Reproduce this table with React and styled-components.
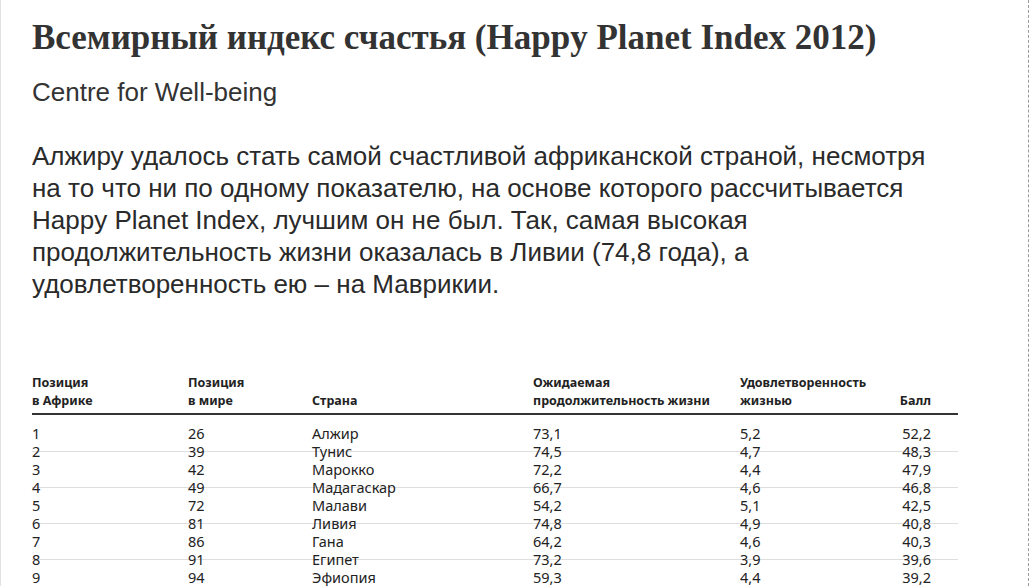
import React from 'react';
import styled, { createGlobalStyle } from 'styled-components';

const GlobalStyle = createGlobalStyle`
  html, body {
    margin: 0;
    padding: 0;
    background: #fff;
  }
  body {
    font-family: 'Liberation Sans', Arial, sans-serif;
    color: #333;
  }
`;

const Page = styled.div`
  box-sizing: border-box;
  width: 1029px;
  height: 586px;
  overflow: hidden;
  border-left: 1px solid #e2e2e2;
  border-right: 1px dashed #999;
`;

const Article = styled.article`
  padding: 16px 0 0 31px;
  width: 930px;
`;

const Title = styled.h1`
  margin: 0;
  font-family: 'Liberation Serif', 'DejaVu Serif', serif;
  font-weight: bold;
  font-size: 35px;
  line-height: 44px;
  color: #333;
`;

const Source = styled.p`
  margin: 16px 0 0;
  font-size: 26px;
  line-height: 32px;
`;

const Lead = styled.p`
  margin: 32px 0 0;
  max-width: 900px;
  font-size: 26px;
  line-height: 32px;
  color: #2a2a2a;
`;

const Table = styled.table`
  margin-top: 74px;
  width: 926px;
  border-collapse: collapse;
  font-family: 'Noto Sans', 'Open Sans', sans-serif;
  color: #222;
`;

const HeadCell = styled.th`
  padding: 0 0 3px;
  text-align: ${(p) => (p.right ? 'right' : 'left')};
  vertical-align: bottom;
  font-size: 12.5px;
  line-height: 18px;
  font-weight: bold;
  width: ${(p) => p.w}px;
  border-bottom: 2px solid #333;
  padding-right: ${(p) => (p.right ? '27px' : '0')};
`;

const Row = styled.tr`
  background: ${(p) =>
    p.striped
      ? 'linear-gradient(transparent 9px, #dedede 9px, #dedede 10px, transparent 10px)'
      : 'none'};
  &:first-child td {
    padding-top: 9px;
  }
`;

const Cell = styled.td`
  padding: 0;
  height: 18px;
  font-size: 14.5px;
  line-height: 18px;
  text-align: ${(p) => (p.right ? 'right' : 'left')};
  padding-right: ${(p) => (p.right ? '27px' : '0')};
`;

const rows = [
  ['1', '26', 'Алжир', '73,1', '5,2', '52,2'],
  ['2', '39', 'Тунис', '74,5', '4,7', '48,3'],
  ['3', '42', 'Марокко', '72,2', '4,4', '47,9'],
  ['4', '49', 'Мадагаскар', '66,7', '4,6', '46,8'],
  ['5', '72', 'Малави', '54,2', '5,1', '42,5'],
  ['6', '81', 'Ливия', '74,8', '4,9', '40,8'],
  ['7', '86', 'Гана', '64,2', '4,6', '40,3'],
  ['8', '91', 'Египет', '73,2', '3,9', '39,6'],
  ['9', '94', 'Эфиопия', '59,3', '4,4', '39,2'],
];

export default function App() {
  return (
    <>
      <GlobalStyle />
      <Page>
        <Article>
          <Title>Всемирный индекс счастья (Happy Planet Index 2012)</Title>
          <Source>Centre for Well-being</Source>
          <Lead>
            Алжиру удалось стать самой счастливой африканской страной, несмотря
            на то что ни по одному показателю, на основе которого рассчитывается
            Happy Planet Index, лучшим он не был. Так, самая высокая
            продолжительность жизни оказалась в Ливии (74,8 года), а
            удовлетворенность ею – на Маврикии.
          </Lead>
          <Table>
            <thead>
              <tr>
                <HeadCell w={156}>Позиция<br />в Африке</HeadCell>
                <HeadCell w={124}>Позиция<br />в мире</HeadCell>
                <HeadCell w={221}>Страна</HeadCell>
                <HeadCell w={207}>Ожидаемая<br />продолжительность жизни</HeadCell>
                <HeadCell w={140}>Удовлетворенность<br />жизнью</HeadCell>
                <HeadCell right>Балл</HeadCell>
              </tr>
            </thead>
            <tbody>
              {rows.map((r, i) => (
                <Row key={r[0]} striped={i % 2 === 1}>
                  {r.map((v, j) => (
                    <Cell key={j} right={j === 5}>{v}</Cell>
                  ))}
                </Row>
              ))}
            </tbody>
          </Table>
        </Article>
      </Page>
    </>
  );
}
